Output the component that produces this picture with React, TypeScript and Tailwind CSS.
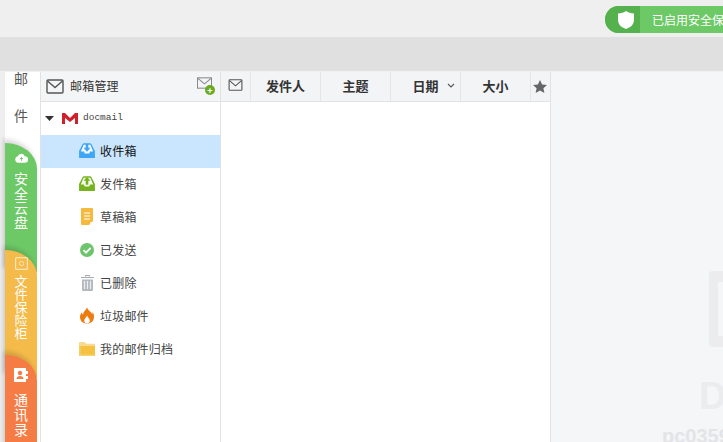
import React from 'react'

const cjk = { fontFamily: '"Noto Sans CJK SC", sans-serif' }

function MailIcon({ className }: { className?: string }) {
  return (
    <svg viewBox="0 0 18 15" className={className} fill="none" stroke="#555" strokeWidth="1.4">
      <rect x="1" y="1" width="16" height="13" rx="1" />
      <path d="M1.5 2 9 8.5 16.5 2" />
    </svg>
  )
}

function InboxIcon({ color, up }: { color: string; up?: boolean }) {
  return (
    <svg viewBox="0 0 18 17" className="h-[15px] w-[16px]">
      <path d="M0 9 4 1.5C4.5.6 5 .4 6 .4h6c1 0 1.500.2 2 1.100L18 9v8H0z" fill={color} />
      <path d="M2 9.500 5.200 2h7.600L16 9.500h-3.500L11.500 12h-5l-1-2.500z" fill="#fff" opacity="0.95" />
      {up ? (
        <path d="M9 1 13 5.500h-2.500V10h-3V5.500H5z" fill={color} />
      ) : (
        <path d="M7.500 1h3v4.500H13L9 10 5 5.500h2.500z" fill={color} />
      )}
    </svg>
  )
}

function DraftIcon() {
  return (
    <svg viewBox="0 0 12 17" className="h-[17px] w-[12px]">
      <path d="M1 0h10a1 1 0 0 1 1 1v12l-4 4H1a1 1 0 0 1-1-1V1a1 1 0 0 1 1-1z" fill="#f4b93d" />
      <path d="M3 5h6M3 8h6M3 11h6" stroke="#fff" strokeWidth="1.100" />
      <path d="M9 14.500h3L9.500 17z" fill="#fff" />
    </svg>
  )
}

function SentIcon() {
  return (
    <svg viewBox="0 0 14 14" className="h-[14px] w-[14px]">
      <circle cx="7" cy="7" r="7" fill="#6cc56c" />
      <path d="M3.500 7.200 6 9.700 10.700 4.800" fill="none" stroke="#fff" strokeWidth="1.800" />
    </svg>
  )
}

function TrashIcon() {
  return (
    <svg viewBox="0 0 13 16" className="h-[16px] w-[13px]">
      <path d="M4.500 1.500V.5h4v1M0 2.500h13" stroke="#a8adb3" strokeWidth="1.200" fill="none" />
      <path d="M1 4.500h11V15a1 1 0 0 1-1 1H2a1 1 0 0 1-1-1z" fill="#b4b9bf" />
      <path d="M3.500 6v8M6.500 6v8M9.500 6v8" stroke="#eceef0" strokeWidth="1.200" />
    </svg>
  )
}

function FireIcon() {
  return (
    <svg viewBox="0 0 15 17" className="h-[17px] w-[14px]">
      <path d="M7.500 0C8.500 3 12 5 13 7c.5-.5.600-1.500.5-2.500 1.200 2 1.500 4 1.500 5.500 0 4-3 7-7.500 7S0 14 0 10c0-2 1-3.500 2-5 0 1.200.4 2 1.200 2.500C3.500 4.500 6 3 7.500 0z" fill="#ee7b0e" />
      <path d="M7.500 8.500C8 10.500 10.500 11.500 10.500 14c0 1.500-1.300 3-3 3s-3-1.500-3-3c0-2.500 2.500-3 3-5.500z" fill="#fff" />
    </svg>
  )
}

function FolderIcon() {
  return (
    <svg viewBox="0 0 17 15" className="h-[16px] w-[16px]">
      <path d="M0 1a1 1 0 0 1 1-1h5l2 2h8a1 1 0 0 1 1 1v1H0z" fill="#f8dc8e" />
      <path d="M0 4h17v10a1 1 0 0 1-1 1H1a1 1 0 0 1-1-1z" fill="#f4c240" />
      <path d="M1 5v9h15" fill="none" stroke="#fbe3a0" strokeWidth="0.800" />
    </svg>
  )
}

function SideTab({ label, className, icon }: { label: string[]; className: string; icon: React.ReactNode }) {
  return (
    <div className={`relative flex shrink-0 -mt-[22px] flex-col items-center rounded-tr-[32px_26px] text-white shadow-[-2px_-4px_4px_rgba(0,0,0,0.14)] ${className}`}>
      {icon}
      {label.map((c) => (
        <span key={c}>{c}</span>
      ))}
    </div>
  )
}

const folders = [
  { name: '发件箱', icon: <InboxIcon color="#76b41e" up /> },
  { name: '草稿箱', icon: <DraftIcon /> },
  { name: '已发送', icon: <SentIcon /> },
  { name: '已删除', icon: <TrashIcon /> },
  { name: '垃圾邮件', icon: <FireIcon /> },
  { name: '我的邮件归档', icon: <FolderIcon /> },
]

const columns = [
  { name: '发件人', w: 'w-[70px]' },
  { name: '主题', w: 'w-[70px]' },
  { name: '日期', w: 'w-[70px]', sort: true },
  { name: '大小', w: 'w-[70px]' },
]

export default function App() {
  return (
    <div className="flex h-[442px] w-[723px] flex-col overflow-hidden bg-white text-[12px] tracking-[0.2px] text-[#444]" style={cjk}>
      {/* Title bar */}
      <div className="flex h-[37px] shrink-0 items-center justify-end bg-[#efefef] pt-[2px]">
        <div className="flex h-[27px] w-[118px] items-center overflow-hidden rounded-l-full bg-[#6dc866]">
          <div className="flex h-full w-[35px] shrink-0 items-center justify-center bg-[#55b04e] pl-[6px]">
            <svg viewBox="0 0 16 18" className="h-[18px] w-[16px]">
              <path d="M8 0c2 1.500 5 2.500 8 2.500V9c0 4.500-3.500 7.500-8 9-4.500-1.500-8-4.500-8-9V2.500C3 2.500 6 1.500 8 0z" fill="#fff" />
            </svg>
          </div>
          <span className="ml-[12px] whitespace-nowrap text-[12px] tracking-normal text-white">已启用安全保</span>
        </div>
      </div>
      {/* Toolbar */}
      <div className="h-[35px] shrink-0 border-b border-[#f0f0f0] bg-[#e0e0e0]" />

      <div className="flex min-h-0 flex-1">
        {/* Side tabs */}
        <div className="w-[41px] shrink-0 overflow-hidden border-r border-[#e2e2e2] bg-white pr-[3px]">
          <div className="flex h-full flex-col overflow-hidden bg-[#eeeeee] pl-[5px]">
            <div className="flex h-[93px] shrink-0 flex-col items-center bg-white text-[14px] leading-[18px] text-[#555]">
              <span className="-mt-[3px]">邮</span>
              <span className="mt-[19px]">件</span>
            </div>
            <SideTab
              label={['安', '全', '云', '盘']}
              className="h-[129px] bg-[#6dc866] pt-[10px] text-[14px] leading-[14.500px]"
              icon={
                <svg viewBox="0 0 14 10" className="mb-[8px] h-[10px] w-[13px] shrink-0">
                  <path d="M3.500 10a3.500 3.500 0 0 1-.5-6.900A4 4 0 0 1 10.500 3 3.500 3.500 0 0 1 10.500 10z" fill="#fff" />
                  <path d="M7 8V4.500M5.500 6 7 4.300 8.500 6" stroke="#6dc866" fill="none" />
                </svg>
              }
            />
            <SideTab
              label={['文', '件', '保', '险', '柜']}
              className="h-[127px] bg-[#f4ba4a] pt-[7px] text-[13px] leading-[13px]"
              icon={
                <svg viewBox="0 0 13 13" className="mb-[4px] h-[13px] w-[13px] shrink-0">
                  <rect x="0.600" y="0.600" width="11.800" height="11.800" rx="1" fill="none" stroke="#fde6b8" strokeWidth="1.200" />
                  <circle cx="6.500" cy="6.500" r="2.200" fill="none" stroke="#fde6b8" />
                </svg>
              }
            />
            <SideTab
              label={['通', '讯', '录']}
              className="h-[100px] bg-[#f67c46] pt-[13px] text-[14px] leading-[15px]"
              icon={
                <svg viewBox="0 0 14 14" className="mb-[10px] h-[14px] w-[14px] shrink-0">
                  <path d="M0 0h12v3h2v3h-2v2h2v3h-2v3H0z" fill="#fff" />
                  <circle cx="6" cy="5" r="2.200" fill="#f67c46" />
                  <path d="M2.500 11c0-2 1.500-3 3.500-3s3.500 1 3.500 3z" fill="#f67c46" />
                </svg>
              }
            />
          </div>
        </div>

        {/* Folder tree */}
        <div className="flex w-[180px] shrink-0 flex-col border-r border-[#e2e2e2]">
          <div className="flex h-[30px] shrink-0 items-center border-b border-[#e2e2e2] bg-[#f3f5f7] pb-[1px] pl-[5px] pr-[5px]">
            <MailIcon className="h-[15px] w-[18px]" />
            <span className="ml-[6px] flex-1 text-[#333]">邮箱管理</span>
            <div className="relative h-[18px] w-[18px]">
              <svg viewBox="0 0 16 12" className="h-[12px] w-[15px]" fill="none" stroke="#888" strokeWidth="1.100">
                <rect x="0.500" y="0.500" width="15" height="11" />
                <path d="M1 1 8 7l7-6" />
              </svg>
              <span className="absolute bottom-0 right-0 flex h-[10px] w-[10px] items-center justify-center rounded-full bg-[#6aaa1e] text-[9px] font-bold leading-none text-white">+</span>
            </div>
          </div>
          <div className="flex h-[33px] shrink-0 items-center pl-[4px]">
            <svg viewBox="0 0 9 5" className="h-[5px] w-[9px]">
              <path d="M0 0h9L4.500 5z" fill="#333" />
            </svg>
            <svg viewBox="0 0 16 11" className="ml-[8px] h-[11px] w-[16px]">
              <path d="M0 0h3l5 5 5-5h3v11h-3V5L8 9 3 5v6H0z" fill="#d0202c" />
            </svg>
            <span className="ml-[5px] text-[9.500px] tracking-normal text-[#444]" style={{ fontFamily: '"Liberation Mono", monospace' }}>docmail</span>
          </div>
          <div className="flex h-[33px] shrink-0 items-center bg-[#c9e6fe] pb-[2px] pl-[38px]">
            <div className="mr-[5px] flex w-[16px] justify-center"><InboxIcon color="#3ea6f4" /></div>
            <span className="text-[#111]">收件箱</span>
          </div>
          {folders.map((f) => (
            <div key={f.name} className="flex h-[33px] shrink-0 items-center pb-[2px] pl-[38px]">
              <div className="mr-[5px] flex w-[16px] justify-center">{f.icon}</div>
              <span>{f.name}</span>
            </div>
          ))}
        </div>

        {/* Message list */}
        <div className="flex w-[330px] shrink-0 flex-col border-r border-[#e2e2e2]">
          <div className="flex h-[30px] shrink-0 border-b border-[#e2e2e2] bg-[#f3f4f6] text-[13px] font-bold tracking-normal text-[#333]">
            <div className="flex w-[30px] shrink-0 items-center justify-center border-r border-[#e6e6e6] pb-[4px]">
              <MailIcon className="h-[12px] w-[15px]" />
            </div>
            {columns.map((c) => (
              <div key={c.name} className={`relative flex shrink-0 items-center justify-center border-r border-[#e6e6e6] pb-[1px] ${c.w}`}>
                {c.name}
                {c.sort && (
                  <svg viewBox="0 0 8 5" className="absolute right-[5px] top-[11px] h-[5px] w-[8px]" fill="none" stroke="#555" strokeWidth="1.100">
                    <path d="M1 1 4 4 7 1" />
                  </svg>
                )}
              </div>
            ))}
            <div className="flex flex-1 items-center justify-center pb-[1px] pr-[1px]">
              <svg viewBox="0 0 14 13" className="h-[13px] w-[14px]">
                <path d="M7 0 9.100 4.500 14 5l-3.600 3.300 1 4.700L7 10.600 2.600 13l1-4.700L0 5l4.900-.5z" fill="#666" />
              </svg>
            </div>
          </div>
        </div>

        {/* Reading pane */}
        <div
          className="flex min-w-0 flex-1 flex-col items-start overflow-hidden whitespace-nowrap bg-[#f4f6f8] pt-[199px] font-bold tracking-normal"
          style={{ fontFamily: '"Liberation Sans", sans-serif' }}
        >
          <div className="ml-[158px] h-[76px] w-[60px] shrink-0 rounded-[4px] bg-[#ececee] py-[11px] pl-[9px]">
            <div className="h-full bg-[#f4f6f8]" />
          </div>
          <div className="ml-[148px] mt-[29px] shrink-0 text-[38px] leading-[40px] text-[#ebecee]">D</div>
          <div className="ml-[111px] mt-[8px] shrink-0 text-[20px] leading-[24px] text-[#e4e4e6]">pc0359</div>
        </div>
      </div>
    </div>
  )
}
